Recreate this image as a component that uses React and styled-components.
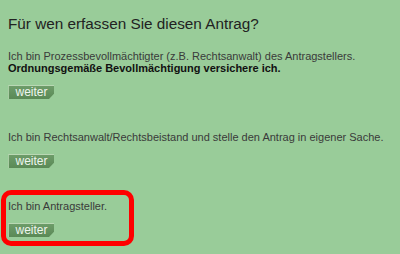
import React from "react";
import styled, { createGlobalStyle } from "styled-components";

const Global = createGlobalStyle`
  html, body { margin: 0; padding: 0; background: #99cc99; }
  body { width: 400px; height: 254px; overflow: hidden; font-family: "Liberation Sans", Arial, sans-serif; }
`;

const Page = styled.div`
  position: relative;
  width: 400px;
  height: 254px;
  box-sizing: border-box;
  padding: 15px 8px 0 8px;
  background: #99cc99;
  color: #333333;
`;

const Title = styled.h1`
  margin: 0 0 16.5px 0;
  font-size: 15.3px;
  font-weight: normal;
  line-height: 18px;
  color: #222222;
`;

const Options = styled.div`
  display: flex;
  flex-direction: column;
  gap: 32px;
`;

const Option = styled.div`
  display: flex;
  flex-direction: column;
  align-items: flex-start;
  gap: 10.5px;
`;

const Text = styled.p`
  margin: 0;
  font-size: 11px;
  line-height: 12.5px;
  color: #3a3a3a;
`;

const Strong = styled.strong`
  color: #111111;
`;

const Button = styled.button`
  box-sizing: border-box;
  width: 46px;
  height: 14px;
  padding: 0 0 1px 0;
  margin: 0;
  border: none;
  border-top: 1px solid #b9d8b4;
  border-left: 1px solid #a9cda4;
  background: linear-gradient(#6d9c69, #5a8956);
  color: #eef5ee;
  font-family: "Liberation Sans", Arial, sans-serif;
  font-size: 12px;
  line-height: 12px;
  text-align: center;
  clip-path: polygon(0 0, 100% 0, 100% 62%, calc(100% - 5px) 100%, 0 100%);
  cursor: pointer;
`;

const Highlight = styled.div`
  position: absolute;
  left: 1px;
  top: 190px;
  width: 133px;
  height: 56px;
  box-sizing: border-box;
  border: 5px solid #ff0000;
  border-radius: 10px;
  pointer-events: none;
`;

const options = [
  {
    text: (
      <>
        Ich bin Prozessbevollmächtigter (z.B. Rechtsanwalt) des Antragstellers.
        <br />
        <Strong>Ordnungsgemäße Bevollmächtigung versichere ich.</Strong>
      </>
    ),
  },
  { text: "Ich bin Rechtsanwalt/Rechtsbeistand und stelle den Antrag in eigener Sache." },
  { text: "Ich bin Antragsteller." },
];

export default function App() {
  return (
    <Page>
      <Global />
      <Title>Für wen erfassen Sie diesen Antrag?</Title>
      <Options>
        {options.map((o, i) => (
          <Option key={i}>
            <Text>{o.text}</Text>
            <Button>weiter</Button>
          </Option>
        ))}
      </Options>
      <Highlight />
    </Page>
  );
}
